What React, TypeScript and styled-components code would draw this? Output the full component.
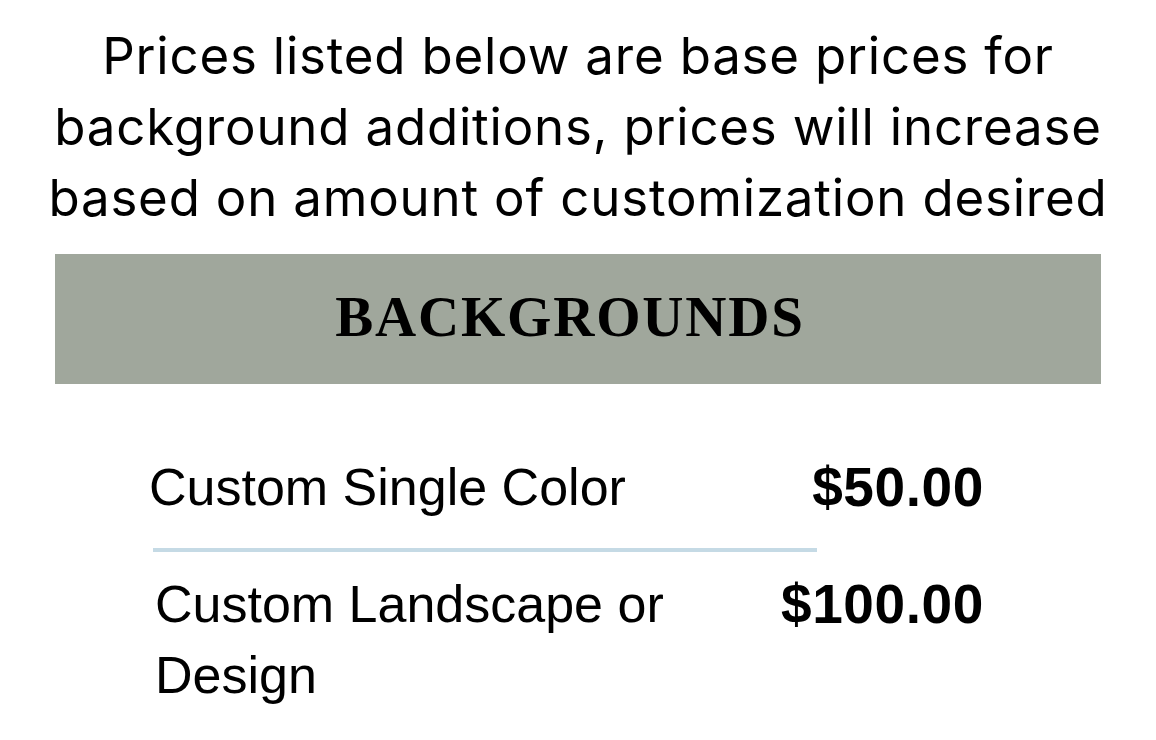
import React from "react";
import styled, { createGlobalStyle } from "styled-components";

const Global = createGlobalStyle`
  body {
    margin: 0;
    background: #ffffff;
    color: #000000;
  }
`;

const Page = styled.main`
  width: 1156px;
  padding-top: 20px;
`;

const Intro = styled.p`
  margin: 0;
  text-align: center;
  font-family: "Inter", "Open Sans", sans-serif;
  font-size: 51px;
  line-height: 71px;
  letter-spacing: 0.8px;
  color: #000;
`;

const Band = styled.div`
  margin: 21px 55px 0;
  height: 130px;
  background: #a0a79c;
  display: flex;
  align-items: center;
  justify-content: center;
`;

const Title = styled.h2`
  margin: 0 0 6px;
  font-family: "Liberation Serif", "Times New Roman", serif;
  font-weight: 700;
  font-size: 57px;
  letter-spacing: 1.8px;
  color: #000;
  padding-right: 16px;
`;

const List = styled.div`
  width: 835px;
  margin: 68px 0 0 149px;
`;

const Row = styled.div<{ $inset?: number }>`
  display: grid;
  grid-template-columns: 1fr auto;
  align-items: start;
  padding-left: ${(p) => p.$inset ?? 0}px;
`;

const Label = styled.span`
  font-family: "Liberation Sans", Arial, sans-serif;
  font-size: 52px;
  line-height: 71px;
  max-width: 560px;
`;

const Price = styled.span`
  font-family: "Liberation Sans", Arial, sans-serif;
  font-weight: 700;
  font-size: 55px;
  line-height: 71px;
  letter-spacing: 0.6px;
  text-align: right;
`;

const Divider = styled.hr`
  margin: 25px 0 17px 4px;
  width: 664px;
  height: 4px;
  border: 0;
  background: #c5dae5;
`;

const items = [
  { label: "Custom Single Color", price: "$50.00", inset: 0 },
  { label: "Custom Landscape or Design", price: "$100.00", inset: 6 },
];

export default function App() {
  return (
    <Page>
      <Global />
      <Intro>
        Prices listed below are base prices for
        <br />
        background additions, prices will increase
        <br />
        based on amount of customization desired
      </Intro>
      <Band>
        <Title>BACKGROUNDS</Title>
      </Band>
      <List>
        {items.map((it, i) => (
          <React.Fragment key={it.label}>
            {i > 0 && <Divider />}
            <Row $inset={it.inset}>
              <Label>{it.label}</Label>
              <Price>{it.price}</Price>
            </Row>
          </React.Fragment>
        ))}
      </List>
    </Page>
  );
}
